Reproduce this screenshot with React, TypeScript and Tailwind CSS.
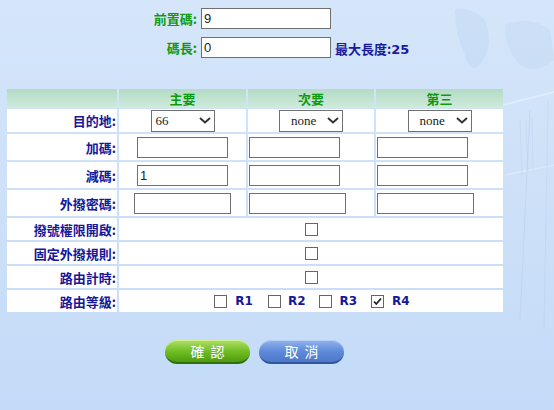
import React from "react";

const CJK = "font-['Noto_Sans_CJK_TC','Noto_Sans_CJK_SC',sans-serif]";
const LAT = "font-['DejaVu_Sans','Noto_Sans_CJK_TC',sans-serif]";

function TextBox({ w, value = "" }: { w: string; value?: string }) {
  return (
    <div
      className={`${w} h-[21px] bg-white border border-[#707070] flex items-center pl-[2px] text-[13px] leading-none text-[#222] font-['Liberation_Sans',sans-serif]`}
    >
      {value}
    </div>
  );
}

function Chevron() {
  return (
    <svg width="12" height="7" viewBox="0 0 12 7" className="shrink-0">
      <path d="M1 1 L6 5.5 L11 1" fill="none" stroke="#333" strokeWidth="2" />
    </svg>
  );
}

function SelectBox({ value, pl }: { value: string; pl: string }) {
  return (
    <div
      className={`w-[64px] h-[22px] bg-white border border-[#707070] flex items-center justify-between ${pl} pr-[3px] text-[13px] leading-none text-[#222] font-['Liberation_Serif',serif]`}
    >
      <span>{value}</span>
      <Chevron />
    </div>
  );
}

function Check({ checked = false }: { checked?: boolean }) {
  return (
    <div className="w-[13px] h-[13px] bg-white border border-[#666] flex items-center justify-center shrink-0">
      {checked && (
        <svg width="11" height="11" viewBox="0 0 11 11">
          <path d="M2 5.5 L4.3 8 L9 2.5" fill="none" stroke="#222" strokeWidth="1.8" />
        </svg>
      )}
    </div>
  );
}

function Label({ children }: { children: React.ReactNode }) {
  return (
    <div
      className={`bg-white flex items-center justify-end pr-[1px] text-[13px] font-bold text-[#17179a] leading-none ${CJK}`}
    >
      {children}
    </div>
  );
}

function Cell({
  children,
  className = "",
}: {
  children?: React.ReactNode;
  className?: string;
}) {
  return <div className={`bg-white flex items-center ${className}`}>{children}</div>;
}

function Header({ children }: { children?: React.ReactNode }) {
  return (
    <div
      className={`bg-gradient-to-b from-[#b2dbc4] to-[#cdeada] flex items-center justify-center text-[13px] font-bold text-[#119911] leading-none ${CJK}`}
    >
      {children}
    </div>
  );
}

export default function App() {
  return (
    <div className="relative w-[554px] h-[410px] overflow-hidden bg-gradient-to-b from-[#d5e6fa] via-[#cde0f8] to-[#c3dbf8]">
      <svg
        className="absolute inset-0 pointer-events-none"
        width="554"
        height="410"
        viewBox="0 0 554 410"
      >
        <path
          d="M455 10 Q470 5 485 20 Q495 45 480 65 Q470 75 465 55 Q455 35 455 10 Z"
          fill="#b9d2f0"
          opacity="0.35"
        />
        <path
          d="M505 25 Q530 15 550 30 L554 60 Q535 75 520 65 Q505 50 505 25 Z"
          fill="#b9d2f0"
          opacity="0.3"
        />
        <path d="M503 105 L554 92" stroke="#ffffff" strokeWidth="2" opacity="0.35" />
        <path d="M505 175 L554 165" stroke="#ffffff" strokeWidth="1.5" opacity="0.25" />
        <path d="M530 110 L520 320" stroke="#b4cbea" strokeWidth="1" opacity="0.45" />
        <path d="M548 100 L544 330" stroke="#b4cbea" strokeWidth="1" opacity="0.35" />
        <path d="M520 120 L522 175 M526 120 L528 172 M532 118 L533 170" stroke="#b8cdea" strokeWidth="1" opacity="0.35" />
      </svg>

      <div className="relative pt-[8px]">
        <div className="flex items-center">
          <div
            className={`w-[197px] text-right text-[13px] font-bold text-[#119911] leading-none ${CJK}`}
          >
            前置碼:
          </div>
          <div className="ml-[4px]">
            <TextBox w="w-[130px]" value="9" />
          </div>
        </div>
        <div className="flex items-end mt-[8px]">
          <div
            className={`w-[197px] self-center text-right text-[13px] font-bold text-[#119911] leading-none ${CJK}`}
          >
            碼長:
          </div>
          <div className="ml-[4px]">
            <TextBox w="w-[130px]" value="0" />
          </div>
          <div
            className={`ml-[4px] mb-[2px] text-[13px] font-bold text-[#1b1b9e] leading-none ${CJK}`}
          >
            最大長度:<span className={LAT}>25</span>
          </div>
        </div>

        <div className="mt-[31px] ml-[7px] grid grid-cols-[110px_127px_126px_127px] grid-rows-[18px_23px_26px_26px_26px_22px_22px_22px_22px] gap-[2px] w-[496px]">
          <Header />
          <Header>主要</Header>
          <Header>次要</Header>
          <Header>第三</Header>

          <Label>目的地:</Label>
          <Cell className="justify-center">
            <SelectBox value="66" pl="pl-[4px]" />
          </Cell>
          <Cell className="justify-center">
            <SelectBox value="none" pl="pl-[11px]" />
          </Cell>
          <Cell className="justify-center">
            <SelectBox value="none" pl="pl-[11px]" />
          </Cell>

          <Label>加碼:</Label>
          <Cell className="justify-center">
            <TextBox w="w-[91px]" />
          </Cell>
          <Cell className="pl-[1px]">
            <TextBox w="w-[91px]" />
          </Cell>
          <Cell className="pl-[1px]">
            <TextBox w="w-[91px]" />
          </Cell>

          <Label>減碼:</Label>
          <Cell className="justify-center">
            <TextBox w="w-[91px]" value="1" />
          </Cell>
          <Cell className="pl-[1px]">
            <TextBox w="w-[91px]" />
          </Cell>
          <Cell className="pl-[1px]">
            <TextBox w="w-[91px]" />
          </Cell>

          <Label>外撥密碼:</Label>
          <Cell className="justify-center">
            <TextBox w="w-[97px]" />
          </Cell>
          <Cell className="pl-[1px]">
            <TextBox w="w-[97px]" />
          </Cell>
          <Cell className="pl-[1px]">
            <TextBox w="w-[97px]" />
          </Cell>

          <Label>撥號權限開啟:</Label>
          <Cell className="col-span-3 justify-center">
            <Check />
          </Cell>

          <Label>固定外撥規則:</Label>
          <Cell className="col-span-3 justify-center">
            <Check />
          </Cell>

          <Label>路由計時:</Label>
          <Cell className="col-span-3 justify-center">
            <Check />
          </Cell>

          <Label>路由等級:</Label>
          <Cell
            className={`col-span-3 justify-center pl-[2px] text-[12px] font-bold text-[#17179a] leading-none ${LAT}`}
          >
            <Check />
            <span className="ml-[8px]">R1</span>
            <span className="ml-[15px]">
              <Check />
            </span>
            <span className="ml-[7px]">R2</span>
            <span className="ml-[13px]">
              <Check />
            </span>
            <span className="ml-[8px]">R3</span>
            <span className="ml-[14px]">
              <Check checked />
            </span>
            <span className="ml-[8px]">R4</span>
          </Cell>
        </div>

        <div className="flex ml-[165px] mt-[28px] gap-[9px]">
          <div
            className={`w-[85px] h-[24px] rounded-full bg-gradient-to-b from-[#b0e066] via-[#72bf24] to-[#4e9a12] border-b-[2px] border-[#2f7008] shadow-[inset_0_1px_0_#d0f090] flex items-center justify-center pl-[6px] tracking-[6px] text-[14px] text-white leading-none ${CJK}`}
          >
            確認
          </div>
          <div
            className={`w-[85px] h-[24px] rounded-full bg-gradient-to-b from-[#93b5ec] via-[#5f8bd9] to-[#4d78cb] border-b-[2px] border-[#33569e] shadow-[inset_0_1px_0_#b8d0f5] flex items-center justify-center pl-[6px] tracking-[6px] text-[14px] text-white leading-none ${CJK}`}
          >
            取消
          </div>
        </div>
      </div>
    </div>
  );
}
